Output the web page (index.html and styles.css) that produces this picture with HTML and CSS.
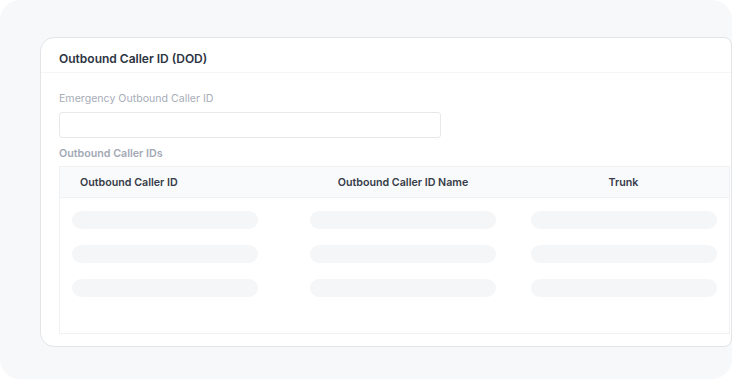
FILE: index.html
```html
<!DOCTYPE html>
<html lang="en">
<head>
    <meta charset="UTF-8">
    <meta name="viewport" content="width=device-width, initial-scale=1.0">
    <title>Outbound Caller ID (DOD)</title>
    <link rel="stylesheet" href="styles.css">
</head>
<body>

    <div class="panel">
        <div class="card">
            <div class="card-header">
                <h2>Outbound Caller ID (DOD)</h2>
            </div>

            <div class="card-body">
                <label class="field-label" for="emergency-id">Emergency Outbound Caller ID</label>
                <input class="field-input" id="emergency-id" type="text">

                <div class="section-label">Outbound Caller IDs</div>

                <div class="table">
                    <div class="table-head">
                        <div class="th th-left">Outbound Caller ID</div>
                        <div class="th">Outbound Caller ID Name</div>
                        <div class="th">Trunk</div>
                    </div>

                    <div class="table-rows">
                        <div class="row">
                            <div class="cell cell-left"><span class="bar"></span></div>
                            <div class="cell"><span class="bar"></span></div>
                            <div class="cell"><span class="bar"></span></div>
                        </div>
                        <div class="row">
                            <div class="cell cell-left"><span class="bar"></span></div>
                            <div class="cell"><span class="bar"></span></div>
                            <div class="cell"><span class="bar"></span></div>
                        </div>
                        <div class="row">
                            <div class="cell cell-left"><span class="bar"></span></div>
                            <div class="cell"><span class="bar"></span></div>
                            <div class="cell"><span class="bar"></span></div>
                        </div>
                    </div>
                </div>
            </div>
        </div>
    </div>

</body>
</html>
```

FILE: styles.css
```css
body {
    font-family: 'Inter', 'Roboto', sans-serif;
    margin: 0;
    padding: 0;
    background-color: #fff;
    overflow: hidden;
}

.panel {
    width: 732px;
    height: 379px;
    box-sizing: border-box;
    padding: 37px 0 0 40px;
    background-color: #f7f8fa;
    border-radius: 20px;
}

.card {
    width: 692px;
    height: 310px;
    box-sizing: border-box;
    background-color: #fff;
    border: 1px solid #e2e4e8;
    border-radius: 14px 8px 8px 14px;
}

.card-header {
    height: 35px;
    box-sizing: border-box;
    padding: 6px 18px 0;
    display: flex;
    align-items: center;
    border-bottom: 1px solid #f4f5f7;
}

h2 {
    margin: 0;
    font-size: 12px;
    font-weight: 600;
    color: #2d3442;
}

.card-body {
    padding: 19px 0 0 18px;
}

.field-label {
    display: block;
    font-size: 10.6px;
    line-height: 14px;
    color: #a8adb8;
}

.field-input {
    display: block;
    box-sizing: border-box;
    width: 382px;
    height: 26px;
    margin-top: 6px;
    border: 1px solid #e6e8ec;
    border-radius: 3px;
    background: #fff;
}

.section-label {
    margin-top: 9px;
    font-size: 10.7px;
    line-height: 14px;
    font-weight: 600;
    color: #a4a9b6;
}

.table {
    width: 671px;
    height: 168px;
    box-sizing: border-box;
    margin-top: 5px;
    border: 1px solid #f0f1f3;
}

.table-head,
.row {
    display: grid;
    grid-template-columns: 224px 238px 1fr;
    padding-right: 4px;
}

.table-head {
    height: 30px;
    align-items: center;
    background-color: #f9fafb;
    border-bottom: 1px solid #f0f1f3;
}

.th {
    font-size: 10.7px;
    font-weight: 600;
    color: #363c48;
    text-align: center;
}

.th-left {
    text-align: left;
    padding-left: 20px;
}

.table-rows {
    display: flex;
    flex-direction: column;
    gap: 16px;
    padding-top: 13px;
}

.cell {
    display: flex;
    justify-content: center;
}

.cell-left {
    justify-content: flex-start;
    padding-left: 12px;
}

.bar {
    display: block;
    width: 186px;
    height: 18px;
    border-radius: 9px;
    background-color: #f5f6f8;
}
```
